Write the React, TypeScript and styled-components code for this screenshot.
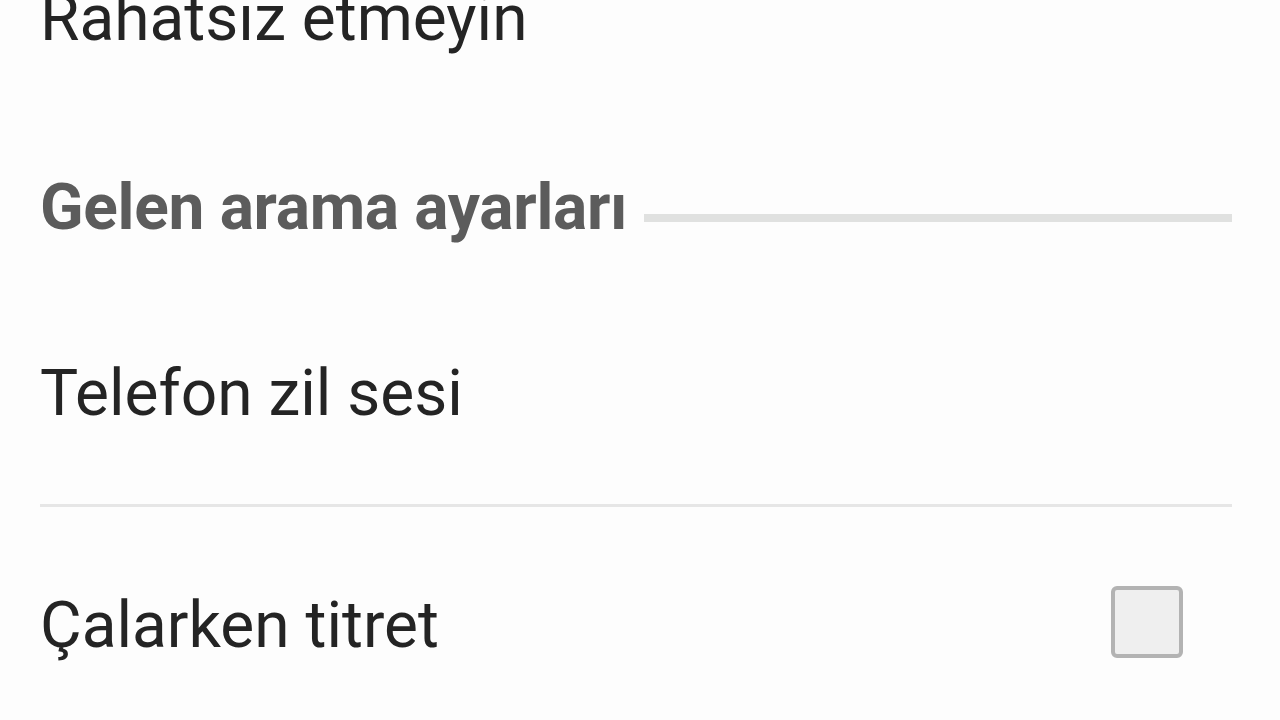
import React from "react";
import styled, { createGlobalStyle } from "styled-components";

const Global = createGlobalStyle`
  html, body { margin: 0; padding: 0; background: #fdfdfd; }
  body { width: 1280px; height: 720px; overflow: hidden; font-family: Roboto, "Liberation Sans", sans-serif; }
`;

const Screen = styled.div`
  width: 1280px;
  height: 720px;
  background: #fdfdfd;
  padding: 0 48px 0 40px;
  box-sizing: border-box;
  display: flex;
  flex-direction: column;
  overflow: hidden;
`;

const Item = styled.div<{ $top: number }>`
  padding-top: ${(p) => p.$top}px;
  height: 75px;
  display: flex;
  align-items: center;
  justify-content: space-between;
  flex-shrink: 0;
`;

const Label = styled.span`
  font-size: 64px;
  line-height: 75px;
  color: #242424;
  white-space: nowrap;
`;

const Header = styled.div<{ $top: number }>`
  padding-top: ${(p) => p.$top}px;
  height: 75px;
  display: flex;
  align-items: flex-start;
  gap: 17px;
  flex-shrink: 0;
`;

const HeaderText = styled.span`
  font-size: 64px;
  line-height: 75px;
  font-weight: 700;
  color: #5c5c5c;
  letter-spacing: -0.3px;
  white-space: nowrap;
`;

const HeaderLine = styled.div`
  flex: 1;
  height: 8px;
  background: #e0e1e0;
  margin-top: 44px;
`;

const Divider = styled.div<{ $top: number }>`
  margin-top: ${(p) => p.$top}px;
  height: 3px;
  background: #e6e6e6;
  flex-shrink: 0;
`;

const Check = styled.div`
  width: 64px;
  height: 64px;
  border: 4px solid #b3b3b3;
  border-radius: 6px;
  background: #efefef;
  margin: 0 49px 8px 0;
  flex-shrink: 0;
`;

export default function App() {
  return (
    <>
      <Global />
      <Screen>
        <Item $top={0} style={{ marginTop: -19 }}>
          <Label>Rahatsız etmeyin</Label>
        </Item>
        <Header $top={114}>
          <HeaderText>Gelen arama ayarları</HeaderText>
          <HeaderLine />
        </Header>
        <Item $top={111}>
          <Label>Telefon zil sesi</Label>
        </Item>
        <Divider $top={73} />
        <Item $top={81}>
          <Label>Çalarken titret</Label>
          <Check />
        </Item>
      </Screen>
    </>
  );
}
